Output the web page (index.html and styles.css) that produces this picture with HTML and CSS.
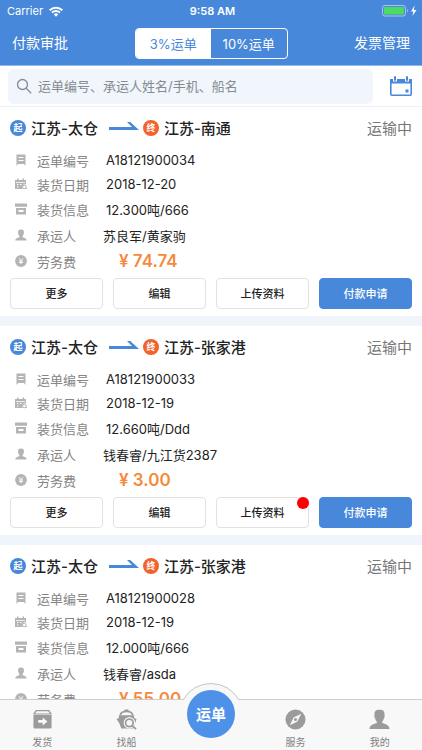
FILE: index.html
```html
<!DOCTYPE html>
<html lang="zh-CN">
<head>
<meta charset="utf-8">
<meta name="viewport" content="width=device-width, initial-scale=1">
<title>运单</title>
<link rel="stylesheet" href="styles.css">
</head>
<body>
<svg class="defs" aria-hidden="true">
  <symbol id="i-no" viewBox="0 0 12 12"><path fill="currentColor" fill-rule="evenodd" d="M1.500 0.500h9V12l-1.500-2h-6l-1.500 2zM3.500 3v1h5V3zM3.500 6v1h5V6z"/></symbol>
  <symbol id="i-date" viewBox="0 0 12 12"><path fill="currentColor" fill-rule="evenodd" d="M0 2h2V.5h1.500V2h4V.5H9V2h2v4.500a3 3 0 0 0-3.500 4.500H0zM1 4v.8h9V4zM2 6v1h1.500V6zM5 6v1h1.500V6zM2 8.500v1h1.500v-1z"/><circle cx="9.300" cy="9" r="1.800" fill="none" stroke="currentColor"/><path d="M10.300 10.500h1.700" stroke="currentColor"/></symbol>
  <symbol id="i-info" viewBox="0 0 12 12"><path fill="currentColor" fill-rule="evenodd" d="M0 .5h12v3.200H0zM1 5h10v6.500H1zM3.500 7v2h5V7z"/></symbol>
  <symbol id="i-user" viewBox="0 0 22 22"><path fill="currentColor" d="M11 .8c3.800 0 5.300 1.400 5.300 4.700v1.700c.3.900 0 1.900-.7 2.400-.3 1.700-1 2.800-1.800 3.500v1.400c1.600 1.500 7.400 1.300 7.700 6.500H.5c.3-5.200 6.100-5 7.700-6.500v-1.400c-.8-.7-1.500-1.800-1.800-3.500-.7-.5-1-1.500-.7-2.400V5.500C5.700 2.200 7.200.8 11 .8z"/></symbol>
  <symbol id="i-fee" viewBox="0 0 12 12"><circle cx="6" cy="6" r="5.900" fill="currentColor"/><path d="M4 3.200l2 2.500 2-2.500M6 5.700V9M4 6h4M4 7.500h4" fill="none" stroke="#fff" stroke-width=".9"/></symbol>
  <symbol id="i-arrow" viewBox="0 0 30 14"><path d="M0 6h23l-5-5h3.200L30 9H0z" fill="currentColor"/></symbol>
</svg>
<div class="app">
  <header class="top">
    <div class="status">
      <span class="carrier">Carrier
        <svg width="14" height="11" viewBox="0 0 14 11" aria-hidden="true"><g fill="none" stroke="#fff" stroke-width="2"><path d="M.7 4.200a9 9 0 0 1 12.600 0"/><path d="M3 6.600a5.600 5.600 0 0 1 8 0"/></g><path d="M4.800 8.400a3.100 3.100 0 0 1 4.400 0L7 10.800z" fill="#fff"/></svg>
      </span>
      <span class="clock">9:58 AM</span>
      <svg class="battery" width="36" height="12" viewBox="0 0 36 12" aria-hidden="true"><rect x=".5" y=".5" width="23" height="10.500" rx="2.500" fill="none" stroke="#a9c6ee"/><rect x="2" y="2" width="20" height="7.500" rx="1" fill="#4cd964"/><path d="M25 4c1.200.5 1.200 3 0 3.500z" fill="#a9c6ee"/><path d="M32.500.5L29 6.500h2.400l-1 4.500L34.500 5h-2.600z" fill="#fff"/></svg>
    </div>
    <nav class="nav">
      <a href="#approve">付款审批</a>
      <div class="segment">
        <button class="on" type="button">3%运单</button>
        <button type="button">10%运单</button>
      </div>
      <a class="right" href="#invoice">发票管理</a>
    </nav>
  </header>
  <form class="search">
    <label class="box">
      <svg width="16" height="16" viewBox="0 0 16 16" aria-hidden="true"><g fill="none" stroke="#858b91" stroke-width="1.300"><circle cx="6.500" cy="6.500" r="5"/><path d="M10.200 10.200l5 5"/></g></svg>
      <input type="text" aria-label="搜索" placeholder="运单编号、承运人姓名/手机、船名">
    </label>
    <button class="cal" type="button" aria-label="日期">
      <svg width="22" height="20" viewBox="0 0 22 20" aria-hidden="true"><rect x=".8" y="3.800" width="20.400" height="15.400" rx="1" fill="none" stroke="#4888da" stroke-width="1.600"/><path d="M0 3h22v4.500H0z" fill="#4888da"/><path d="M5 0v5.500M17 0v5.500" stroke="#fff" stroke-width="4"/><path d="M5 .2v4.500M17 .2v4.500" stroke="#4888da" stroke-width="2"/><path d="M15.500 13.500h3v3h-3z" fill="#4888da"/></svg>
    </button>
  </form>
  <main class="list">
    <article class="card">
      <h2 class="route"><span class="pin">起</span><span class="place">江苏-太仓</span><svg class="arrow" aria-hidden="true"><use href="#i-arrow"/></svg><span class="pin end">终</span><span class="place">江苏-南通</span><span class="state">运输中</span></h2>
      <dl class="facts">
        <div class="tight"><dt><svg><use href="#i-no"/></svg>运单编号</dt><dd>A18121900034</dd></div>
        <div class="tight"><dt><svg><use href="#i-date"/></svg>装货日期</dt><dd>2018-12-20</dd></div>
        <div><dt><svg><use href="#i-info"/></svg>装货信息</dt><dd>12.300吨/666</dd></div>
        <div class="person"><dt><svg><use href="#i-user"/></svg>承运人</dt><dd>苏良军/黄家驹</dd></div>
        <div class="fee"><dt><svg><use href="#i-fee"/></svg>劳务费</dt><dd>¥ 74.74</dd></div>
      </dl>
      <div class="actions"><button type="button">更多</button><button type="button">编辑</button><button type="button">上传资料</button><button class="pay" type="button">付款申请</button></div>
    </article>
    <article class="card">
      <h2 class="route"><span class="pin">起</span><span class="place">江苏-太仓</span><svg class="arrow" aria-hidden="true"><use href="#i-arrow"/></svg><span class="pin end">终</span><span class="place">江苏-张家港</span><span class="state">运输中</span></h2>
      <dl class="facts">
        <div class="tight"><dt><svg><use href="#i-no"/></svg>运单编号</dt><dd>A18121900033</dd></div>
        <div class="tight"><dt><svg><use href="#i-date"/></svg>装货日期</dt><dd>2018-12-19</dd></div>
        <div><dt><svg><use href="#i-info"/></svg>装货信息</dt><dd>12.660吨/Ddd</dd></div>
        <div class="person"><dt><svg><use href="#i-user"/></svg>承运人</dt><dd>钱春睿/九江货2387</dd></div>
        <div class="fee"><dt><svg><use href="#i-fee"/></svg>劳务费</dt><dd>¥ 3.00</dd></div>
      </dl>
      <div class="actions"><button type="button">更多</button><button type="button">编辑</button><button class="alert" type="button">上传资料</button><button class="pay" type="button">付款申请</button></div>
    </article>
    <article class="card">
      <h2 class="route"><span class="pin">起</span><span class="place">江苏-太仓</span><svg class="arrow" aria-hidden="true"><use href="#i-arrow"/></svg><span class="pin end">终</span><span class="place">江苏-张家港</span><span class="state">运输中</span></h2>
      <dl class="facts">
        <div class="tight"><dt><svg><use href="#i-no"/></svg>运单编号</dt><dd>A18121900028</dd></div>
        <div class="tight"><dt><svg><use href="#i-date"/></svg>装货日期</dt><dd>2018-12-19</dd></div>
        <div><dt><svg><use href="#i-info"/></svg>装货信息</dt><dd>12.000吨/666</dd></div>
        <div class="person"><dt><svg><use href="#i-user"/></svg>承运人</dt><dd>钱春睿/asda</dd></div>
        <div class="fee"><dt><svg><use href="#i-fee"/></svg>劳务费</dt><dd>¥ 55.00</dd></div>
      </dl>
    </article>
  </main>
  <nav class="tabs">
    <a href="#send"><svg viewBox="0 0 22 22" aria-hidden="true"><path fill="currentColor" fill-rule="evenodd" d="M4 1h14l3 4.500H1zM1.500 6h19v13a1.500 1.500 0 0 1-1.500 1.500H3A1.500 1.500 0 0 1 1.500 19zM6.500 11.500v3h4.700v2.700l5-4.200-5-4.200v2.700z"/><path d="M4.800 2.300h12.400l1.500 2.500H3.300z" fill="#f8f8f8"/></svg>发货</a>
    <a href="#find"><svg viewBox="0 0 22 22" aria-hidden="true"><path fill="currentColor" d="M9 .5h4v2H9z"/><path d="M4.500 6.500C5 3.500 7 2.500 11 2.500s6 1 6.500 4" fill="none" stroke="currentColor" stroke-width="1.800"/><path fill="currentColor" d="M3 6.500h16v3l2.500 1-1 3L18 20.500H5.500L3.500 15 .5 10.500l2.500-1z"/><circle cx="14" cy="14.500" r="6" fill="#f8f8f8"/><g fill="none" stroke="currentColor" stroke-width="1.800"><circle cx="14" cy="14.500" r="4"/><path d="M17 17.500l4 3.500"/></g></svg>找船</a>
    <a class="current" href="#orders"><svg class="arc" viewBox="0 0 58 18" aria-hidden="true"><path d="M0 18L1 17A32 32 0 0 1 57 17L58 18z" fill="#f8f8f8"/><path d="M1 17A32 32 0 0 1 57 17" fill="none" stroke="#c4c4c4"/></svg><span class="ball">运单</span></a>
    <a href="#service"><svg viewBox="0 0 22 22" aria-hidden="true"><circle cx="11" cy="11" r="10.500" fill="currentColor"/><path d="M17 5l-4 8L5 17l4-8z" fill="#f8f8f8"/><circle cx="11" cy="11" r="1.600" fill="currentColor"/></svg>服务</a>
    <a href="#me"><svg viewBox="0 0 22 22" aria-hidden="true"><use href="#i-user"/></svg>我的</a>
  </nav>
</div>
</body>
</html>
```
FILE: styles.css
```css
* { box-sizing: border-box; }
body {
  margin: 0;
  font-family: Inter, "Noto Sans CJK SC", sans-serif;
  font-size: 13px;
  color: #222;
  background: #fff;
}
a { color: inherit; text-decoration: none; }
button, input { font: inherit; color: inherit; padding: 0; }
.defs { display: none; }
.app { display: flex; flex-direction: column; height: 100vh; overflow: hidden; }

.top { flex: none; background: #4888da; color: #fff; }
.status {
  display: grid;
  grid-template-columns: 1fr auto 1fr;
  align-items: center;
  height: 22px;
  padding: 0 4px 0 7px;
  font-size: 11px;
}
.carrier { display: flex; align-items: center; gap: 6px; }
.clock { font-weight: 600; }
.battery { justify-self: end; }
.nav {
  display: grid;
  grid-template-columns: 1fr 153px 1fr;
  align-items: center;
  height: 44px;
  padding: 0 12px;
  font-size: 14px;
  border-bottom: 1px solid #8fb8ec;
}
.nav a { line-height: 20px; padding-bottom: 2px; }
.nav .right { text-align: right; }
.segment {
  display: flex;
  height: 31px;
  border: 1px solid #fff;
  border-radius: 4px;
  overflow: hidden;
  font-size: 13px;
}
.segment button { flex: 1; border: 0; background: none; }
.segment .on { background: #fff; color: #4888da; }

.search {
  flex: none;
  display: flex;
  align-items: center;
  gap: 17px;
  height: 41px;
  padding: 0 10px 0 8px;
  border-bottom: 1px solid #eef2f7;
}
.box {
  flex: 1;
  display: flex;
  align-items: center;
  gap: 6px;
  height: 35px;
  padding: 0 8px;
  border-radius: 6px;
  background: #f0f6fb;
}
.box input { flex: 1; min-width: 0; border: 0; outline: 0; background: none; }
.box input::placeholder { color: #858b91; opacity: 1; }
.cal { display: flex; border: 0; background: none; }

.list { flex: 1; min-height: 0; overflow: hidden; }
.card { padding: 0 10px 7px; border-bottom: 10px solid #eff5fa; }
.card:last-child { border: 0; }
.route {
  display: flex;
  align-items: center;
  height: 41px;
  margin: 0;
  font-size: 15px;
  font-weight: 500;
}
.pin {
  display: grid;
  place-items: center;
  width: 16px;
  height: 16px;
  margin-right: 5px;
  border-radius: 50%;
  background: #4888da;
  color: #fff;
  font-size: 9px;
  font-weight: 700;
  line-height: 1;
}
.pin.end { background: #f2622c; }
.arrow { width: 30px; height: 14px; margin: 0 4px 0 11px; color: #4888da; }
.state { margin-left: auto; color: #777; font-weight: 400; }
.facts { margin: 0; }
.facts div { display: flex; align-items: center; height: 26px; }
.facts .tight { height: 24px; }
.facts dt { display: flex; align-items: center; width: 96px; color: #858585; }
.facts dt svg { width: 12px; height: 12px; margin: 0 10px 0 5px; color: #b4b4b4; }
.facts dd { margin: 0; }
.facts .person dt { width: 93px; }
.facts .fee dt { width: 109px; }
.facts .fee dd { color: #f58a3c; font-size: 17px; font-weight: 600; line-height: 20px; }
.actions { display: grid; grid-template-columns: repeat(4, 1fr); gap: 10px; margin-top: 4px; }
.actions button {
  position: relative;
  height: 31px;
  padding-bottom: 2px;
  border: 1px solid #e2e2e2;
  border-radius: 4px;
  background: #fff;
  font-size: 11px;
  font-weight: 500;
}
.actions .pay { background: #4888da; border-color: #4888da; color: #fff; }
.alert::after {
  content: "";
  position: absolute;
  top: -1px;
  right: -1px;
  width: 12px;
  height: 12px;
  border-radius: 50%;
  background: #f00;
}

.tabs {
  position: relative;
  flex: none;
  display: grid;
  grid-template-columns: repeat(5, 1fr);
  height: 51px;
  border-top: 1px solid #cdcdcd;
  background: #f8f8f8;
  color: #808080;
  font-size: 10px;
}
.tabs a { position: relative; display: flex; flex-direction: column; align-items: center; gap: 4px; padding-top: 9px; }
.tabs svg { width: 21px; height: 21px; color: #9b9b9b; }
.tabs .arc { position: absolute; bottom: 100%; left: 50%; width: 58px; height: 18px; margin: 0 0 -1px -29px; }
.ball {
  position: absolute;
  top: -10px;
  display: grid;
  place-items: center;
  width: 48px;
  height: 48px;
  padding-bottom: 2px;
  border-radius: 50%;
  background: #4d92e8;
  color: #fff;
  font-size: 15px;
  font-weight: 700;
}
```
